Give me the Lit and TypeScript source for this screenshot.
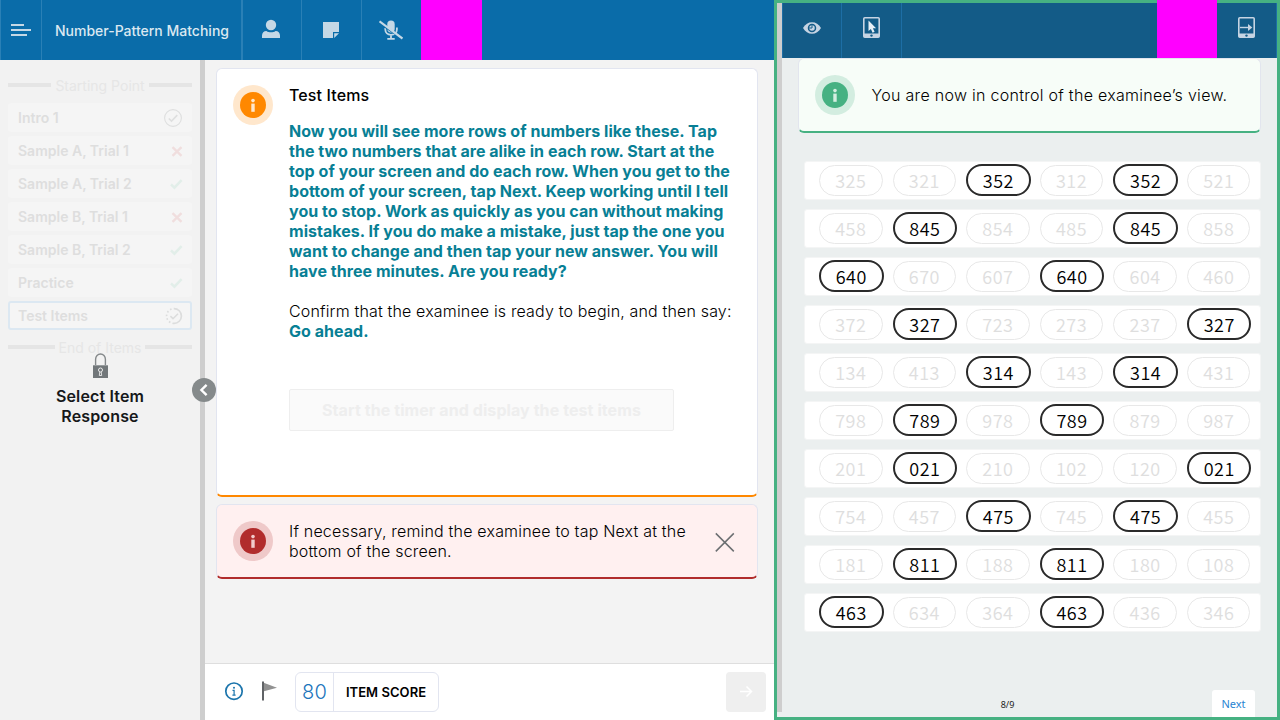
import { LitElement, html, css, svg } from "lit";
import { customElement, property } from "lit/decorators.js";
import { classMap } from "lit/directives/class-map.js";

type Mark = "done" | "wrong" | "right" | "progress";

const ITEMS: { label: string; mark: Mark; current?: boolean }[] = [
  { label: "Intro 1", mark: "done" },
  { label: "Sample A, Trial 1", mark: "wrong" },
  { label: "Sample A, Trial 2", mark: "right" },
  { label: "Sample B, Trial 1", mark: "wrong" },
  { label: "Sample B, Trial 2", mark: "right" },
  { label: "Practice", mark: "right" },
  { label: "Test Items", mark: "progress", current: true },
];

const ROWS: string[][] = [
  ["325", "321", "352", "312", "352", "521"],
  ["458", "845", "854", "485", "845", "858"],
  ["640", "670", "607", "640", "604", "460"],
  ["372", "327", "723", "273", "237", "327"],
  ["134", "413", "314", "143", "314", "431"],
  ["798", "789", "978", "789", "879", "987"],
  ["201", "021", "210", "102", "120", "021"],
  ["754", "457", "475", "745", "475", "455"],
  ["181", "811", "188", "811", "180", "108"],
  ["463", "634", "364", "463", "436", "346"],
];

const markIcon = (mark: Mark) => {
  switch (mark) {
    case "done":
      return svg`<circle cx="10" cy="10" r="8.400" fill="none" stroke="#dedfdf" stroke-width="1.100"/><path d="M5.800 10.500l2.700 2.600 5.800-6" fill="none" stroke="#dedfdf" stroke-width="1.600"/>`;
    case "wrong":
      return svg`<path d="M9.500 6.200l9 8.600M18.500 6.200l-9 8.600" fill="none" stroke="#f0dede" stroke-width="2.400"/>`;
    case "right":
      return svg`<path d="M8 10.400l3.400 3.200 7.200-7.400" fill="none" stroke="#e2eee9" stroke-width="2.600"/>`;
    case "progress":
      return svg`<path d="M11 2.600a7.400 7.400 0 0 1 0 14.800" fill="none" stroke="#dcdddd" stroke-width="1.700"/><path d="M11 17.400a7.400 7.400 0 0 1 0-14.800" fill="none" stroke="#dcdddd" stroke-width="1.700" stroke-dasharray="1.600 2.200"/><path d="M7.400 10.200l2.600 2.500 5-5" fill="none" stroke="#dcdddd" stroke-width="1.600"/>`;
  }
};

@customElement("info-badge")
class InfoBadge extends LitElement {
  static styles = css`
    :host { display: block; width: 40px; height: 40px; flex: none; }
    svg { display: block; }
    .orange { color: #ff8800; }
    .red { color: #b12c2c; }
    .green { color: #46b182; }
  `;
  @property() tone = "orange";
  render() {
    const ink = { orange: "#ffe7cc", red: "#f1cccc", green: "#d5eee1" }[this.tone];
    return html`<svg class=${this.tone} width="40" height="40" viewBox="0 0 40 40">
      <circle cx="20" cy="20" r="20" fill="currentColor" fill-opacity=".2"/>
      <circle cx="20" cy="20" r="13" fill="currentColor"/>
      <circle cx="20" cy="15.6" r="1.8" fill=${ink}/>
      <rect x="18.3" y="18.6" width="3.4" height="8.2" fill=${ink}/>
    </svg>`;
  }
}

@customElement("app-header")
class AppHeader extends LitElement {
  static styles = css`
    :host { display: flex; height: 60px; background: #0a6ca9; color: #c5d8e6; }
    .cell { box-sizing: border-box; width: 60px; border-right: 1px solid #2a80b6; display: flex; align-items: center; justify-content: center; padding-right: 1px; }
    .menu { width: 42px; border-left: 1px solid #2a80b6; padding: 0; }
    .title { width: 201px; border-right-width: 2px; font-size: 14px; font-weight: 500; color: #dbe8f1; padding: 1px 0 0 1px; }
    .first { width: 59px; padding-right: 2px; }
    .person { padding-bottom: 2px; }
    .mask { width: 61px; margin-left: -1px; background: #ff00ff; }
  `;
  render() {
    return html`
      <div class="cell menu"><svg width="20" height="12" viewBox="0 0 20 12" fill="currentColor"><path d="M0 0h13v2H0zM0 5h20v2H0zM0 10h16v2H0z"/></svg></div>
      <div class="cell title">Number-Pattern Matching</div>
      <div class="cell first"><svg class="person" width="20" height="20" viewBox="0 0 20 20" fill="currentColor"><circle cx="10" cy="6" r="5.200"/><path d="M1 18.900v-2.400c0-2.800 1.800-4.600 4.400-4.600 1.500 1 2.800 1.300 4.600 1.300s3.100-.3 4.600-1.300c2.600 0 4.400 1.800 4.400 4.600v2.400z"/></svg></div>
      <div class="cell"><svg width="16" height="16" viewBox="0 0 16 16"><path d="M0 0h16v10h-6v6H0z" fill="currentColor"/><path d="M11.200 11.200H16L11.200 16z" fill="currentColor"/></svg></div>
      <div class="cell"><svg width="24" height="20" viewBox="0 0 24 20" fill="none" stroke="currentColor"><rect x="8.300" y="0.500" width="7.400" height="12" rx="3.700" fill="currentColor" stroke="none"/><path d="M6.300 8v1.600c0 3.200 2.400 5.200 5.700 5.200s5.900-2 5.900-5.200V7.500M12 15v3.600M8.300 18.900h7.400" stroke-width="1.800"/><path d="M1 3.500l23 15.500" stroke="#0a6ca9" stroke-width="2"/><path d="M.5 1.300l23 17.200" stroke-width="2.200"/></svg></div>
      <div class="mask"></div>`;
  }
}

@customElement("item-sidebar")
class ItemSidebar extends LitElement {
  static styles = css`
    :host { box-sizing: border-box; position: relative; width: 205px; border-right: 5px solid #cecece; padding: 15px 8px 0; background: #f2f2f2; }
    .divider { display: flex; align-items: center; gap: 4px; height: 20px; color: #e6e6e6; font-size: 14px; font-weight: 400; white-space: nowrap; }
    .divider::before, .divider::after { content: ""; flex: 1; height: 4px; background: #e5e5e5; }
    .list { display: flex; flex-direction: column; gap: 4px; padding: 8px 0 7px; }
    .item { box-sizing: border-box; height: 29px; border-radius: 3px; background: #f5f5f5; color: #dedede; font-size: 14px; font-weight: 600; display: flex; align-items: center; justify-content: space-between; padding: 0 9px 0 10px; }
    .current { border: 2px solid #dce8f2; padding: 0 7px 0 8px; }
    .lock { position: absolute; left: 0; top: 293px; width: 200px; text-align: center; font-size: 16px; line-height: 20px; font-weight: 600; letter-spacing: .15px; color: #16181a; }
    .lock svg { display: block; margin: 0 auto 8px; }
    .toggle { position: absolute; left: 192px; top: 318px; width: 24px; height: 24px; z-index: 2; }
    .toggle svg { display: block; }
  `;
  render() {
    return html`
      <div class="divider">Starting Point</div>
      <div class="list">
        ${ITEMS.map((i) => html`<div class=${classMap({ item: true, current: !!i.current })}>
          <span>${i.label}</span><svg width="20" height="20" viewBox="0 0 20 20">${markIcon(i.mark)}</svg>
        </div>`)}
      </div>
      <div class="divider">End of Items</div>
      <div class="lock">
        <svg width="15" height="25" viewBox="0 0 15 25"><path d="M2.600 12V6.200a4.900 5.200 0 0 1 9.800 0V12" fill="none" stroke="#85898b" stroke-width="1.400"/><path d="M0 12.300h15V25H0z" fill="#72777a"/><circle cx="7.500" cy="17" r="2" fill="none" stroke="#ececec"/><path d="M6.800 19l-.5 3.500h2.400L8.200 19" fill="none" stroke="#ececec" stroke-width=".9"/></svg>
        Select Item<br>Response
      </div>
      <div class="toggle"><svg width="24" height="24" viewBox="0 0 24 24"><circle cx="12" cy="12" r="12" fill="#858a8b"/><path d="M14.600 6.800L9.400 12l5.200 5.200" fill="none" stroke="#fff" stroke-width="2.400"/></svg></div>`;
  }
}

@customElement("instruction-pane")
class InstructionPane extends LitElement {
  static styles = css`
    :host { display: flex; flex-direction: column; flex: 1; min-width: 0; background: #f3f3f3; }
    .scroll { flex: 1; padding: 8px 16px 0 11px; display: flex; flex-direction: column; gap: 7px; }
    .card { box-sizing: border-box; display: flex; gap: 16px; border: 1px solid #e2e5f0; border-radius: 6px; background: #fff; padding: 16px; font-size: 16px; line-height: 20px; font-weight: 300; letter-spacing: .16px; color: #000; }
    .task { height: 429px; border-bottom: 2px solid #ff8800; }
    .notice { height: 75px; border-bottom: 2px solid #b12c2c; background: #fff0f0; letter-spacing: .19px; }
    h2 { font-size: 16px; line-height: 20px; font-weight: 500; letter-spacing: .13px; margin: 0 0 16px; }
    p { margin: 0 0 20px; white-space: nowrap; }
    .say { color: #087f95; font-weight: 700; letter-spacing: .04px; }
    .start { box-sizing: border-box; width: 385px; height: 42px; margin-top: 48px; border: 1px solid #eee; border-radius: 2px; background: #fafafa; color: #eeeeee; font: inherit; font-weight: 700; letter-spacing: .08px; padding: 0; display: flex; align-items: center; justify-content: center; }
    .notice p { flex: 1; }
    .close { padding: 11px 6px 0 0; }
    .close svg { display: block; }
    .footer { box-sizing: border-box; height: 57px; border-top: 1px solid #dedede; background: #fff; display: flex; align-items: center; padding: 0 8px 0 19px; }
    .footer svg { display: block; }
    .flag { margin-left: 17px; padding-bottom: 2px; }
    .score { box-sizing: border-box; width: 144px; height: 40px; margin-left: 18px; border: 1px solid #e2e5f0; border-radius: 6px; display: flex; }
    .value { box-sizing: border-box; width: 38px; border-right: 1px solid #e2e5f0; font-size: 20px; font-weight: 300; letter-spacing: .3px; color: #1c75bc; display: flex; align-items: center; justify-content: center; }
    .label { flex: 1; font-size: 13px; font-weight: 600; color: #000; display: flex; align-items: center; justify-content: center; letter-spacing: .05px; }
    .next { margin-left: auto; width: 40px; height: 40px; border-radius: 4px; background: #efefef; display: flex; align-items: center; justify-content: center; }
  `;
  render() {
    return html`
      <div class="scroll">
        <section class="card task">
          <info-badge tone="orange"></info-badge>
          <div>
            <h2>Test Items</h2>
            <p class="say">Now you will see more rows of numbers like these. Tap<br>the two numbers that are alike in each row. Start at the<br>top of your screen and do each row. When you get to the<br>bottom of your screen, tap Next. Keep working until I tell<br>you to stop. Work as quickly as you can without making<br>mistakes. If you do make a mistake, just tap the one you<br>want to change and then tap your new answer. You will<br>have three minutes. Are you ready?</p>
            <p>Confirm that the examinee is ready to begin, and then say:<br><span class="say">Go ahead.</span></p>
            <button class="start">Start the timer and display the test items</button>
          </div>
        </section>
        <section class="card notice">
          <info-badge tone="red"></info-badge>
          <p>If necessary, remind the examinee to tap Next at the<br>bottom of the screen.</p>
          <div class="close"><svg width="20" height="20" viewBox="0 0 20 20"><path d="M.8 1.400l18 18M18.800 1.400l-18 18" stroke="#6c6f72" stroke-width="1.500" fill="none"/></svg></div>
        </section>
      </div>
      <div class="footer">
        <svg width="20" height="20" viewBox="0 0 20 20"><circle cx="10" cy="9.200" r="8.200" fill="none" stroke="#1c75ac" stroke-width="1.700"/><circle cx="10" cy="5.800" r="1" fill="#1c75ac"/><path d="M8.500 8.400h1.600V13M8.400 13.200h3.200" fill="none" stroke="#1c75ac" stroke-width="1.200"/></svg>
        <svg class="flag" width="16" height="20" viewBox="0 0 16 20"><path d="M2 1.500l14 5.300L2 10.500z" fill="#919191"/><path d="M1 .5h2v19H1z" fill="#606366"/></svg>
        <div class="score"><div class="value">80</div><div class="label">ITEM SCORE</div></div>
        <div class="next"><svg width="14" height="14" viewBox="0 0 14 14"><path d="M1 6.500h11M7.500 1.500l5 5-5 5" fill="none" stroke="#fff" stroke-width="1.500"/></svg></div>
      </div>`;
  }
}

@customElement("examinee-view")
class ExamineeView extends LitElement {
  static styles = css`
    :host { box-sizing: border-box; width: 506px; height: 720px; border: 3px solid #46b182; display: flex; background: #ebefef; }
    .rail { width: 5px; background: #cecece; margin-bottom: 5px; }
    .body { flex: 1; min-width: 0; display: flex; flex-direction: column; }
    .bar { height: 55px; flex: none; display: flex; background: #135b87; color: #c6d4e3; border-right: 1px solid #1d6ea5; border-left: 1px solid #1d6ea5; }
    .cell { box-sizing: border-box; width: 59px; border-right: 1px solid #1d6ea5; display: flex; align-items: center; justify-content: center; padding-bottom: 6px; }
    .wide { width: 60px; }
    .last { width: 59px; border-right: 0; }
    .mask { width: 60px; margin: -3px 0 0 auto; background: #ff00ff; }
    .alert { box-sizing: border-box; height: 75px; flex: none; margin: 0 16px; border: 1px solid #e2e5ee; border-bottom: 2px solid #46b182; border-radius: 6px; background: #f7fdf8; display: flex; gap: 16px; padding: 16px; font-size: 16px; line-height: 20px; font-weight: 300; letter-spacing: .28px; color: #000; white-space: nowrap; }
    .alert span { padding: 10px 0 0 .6px; }
    .rows { display: flex; flex-direction: column; gap: 9px; padding: 28px 16px 0 22px; }
    .row { box-sizing: border-box; height: 39px; border: 1px solid #f4f5f5; border-radius: 3px; background: #fff; display: grid; grid-template-columns: repeat(6, 73.6px); align-items: center; padding: 0 0 1px 14px; }
    .pill { box-sizing: border-box; width: 63.5px; height: 31px; border: 1px solid #e8e8e8; border-radius: 16px; color: #dedede; font-family: "Noto Sans CJK SC", sans-serif; font-size: 18px; font-weight: 350; letter-spacing: .5px; line-height: 29px; text-align: center; }
    .picked { width: 64.5px; height: 32px; border: 2px solid #2a2a2a; color: #000; line-height: 29px; }
    .pager { flex: 1; display: grid; grid-template-columns: 1fr auto 1fr; align-items: end; padding: 0 22px 0 0; font-family: "Noto Sans", sans-serif; }
    .count { font-size: 9px; color: #222; line-height: 12px; padding: 0 22px 6px 0; }
    .go { justify-self: end; width: 43px; height: 27px; border-radius: 3px 3px 0 0; background: #fff; color: #2a84d2; font-size: 11px; line-height: 28px; text-align: center; }
  `;
  render() {
    return html`
      <div class="rail"></div>
      <div class="body">
        <div class="bar">
          <div class="cell"><svg width="18" height="12" viewBox="0 0 18 12"><path d="M0 6C2.200 2.200 5.300.2 9 .2S15.800 2.200 18 6c-2.200 3.800-5.300 5.800-9 5.800S2.200 9.800 0 6z" fill="currentColor"/><circle cx="9" cy="6" r="3.500" fill="none" stroke="#135b87" stroke-width="1.500"/><path d="M9 3.200v2.800H6.200" fill="none" stroke="#135b87" stroke-width="1"/></svg></div>
          <div class="cell wide"><svg width="17" height="21" viewBox="0 0 17 21"><rect x=".8" y=".8" width="15.400" height="19.400" rx="1" fill="none" stroke="currentColor" stroke-width="1.600"/><path d="M1 16.500h15V20H1z" fill="currentColor"/><circle cx="8.500" cy="18.600" r="1.200" fill="#135b87"/><path d="M5.500 3.500v10.600l2.400-2.200 1.700 3.800 2-.9-1.700-3.600h3.200z" fill="#e6eff6"/></svg></div>
          <div class="mask"></div>
          <div class="cell last"><svg width="17" height="21" viewBox="0 0 17 21"><rect x=".8" y=".8" width="15.400" height="19.400" rx="1" fill="none" stroke="currentColor" stroke-width="1.600"/><path d="M1 16.500h15V20H1z" fill="currentColor"/><circle cx="8.500" cy="18.600" r="1.200" fill="#135b87"/><path d="M2 10.500h9" stroke="currentColor" stroke-width="1.400"/><path d="M10 7l4.300 3.500L10 14z" fill="currentColor"/></svg></div>
        </div>
        <div class="alert"><info-badge tone="green"></info-badge><span>You are now in control of the examinee’s view.</span></div>
        <div class="rows">
          ${ROWS.map((row) => html`<div class="row">
            ${row.map((n) => html`<div class=${classMap({ pill: true, picked: row.filter((m) => m === n).length > 1 })}>${n}</div>`)}
          </div>`)}
        </div>
        <div class="pager"><span></span><span class="count">8/9</span><div class="go">Next</div></div>
      </div>`;
  }
}

@customElement("app-root")
class AppRoot extends LitElement {
  static styles = css`
    :host { display: flex; width: 1280px; height: 720px; overflow: hidden; font-family: Inter, sans-serif; }
    .left { width: 774px; display: flex; flex-direction: column; }
    .work { flex: 1; display: flex; min-height: 0; }
  `;
  render() {
    return html`
      <div class="left">
        <app-header></app-header>
        <div class="work"><item-sidebar></item-sidebar><instruction-pane></instruction-pane></div>
      </div>
      <examinee-view></examinee-view>`;
  }
}
